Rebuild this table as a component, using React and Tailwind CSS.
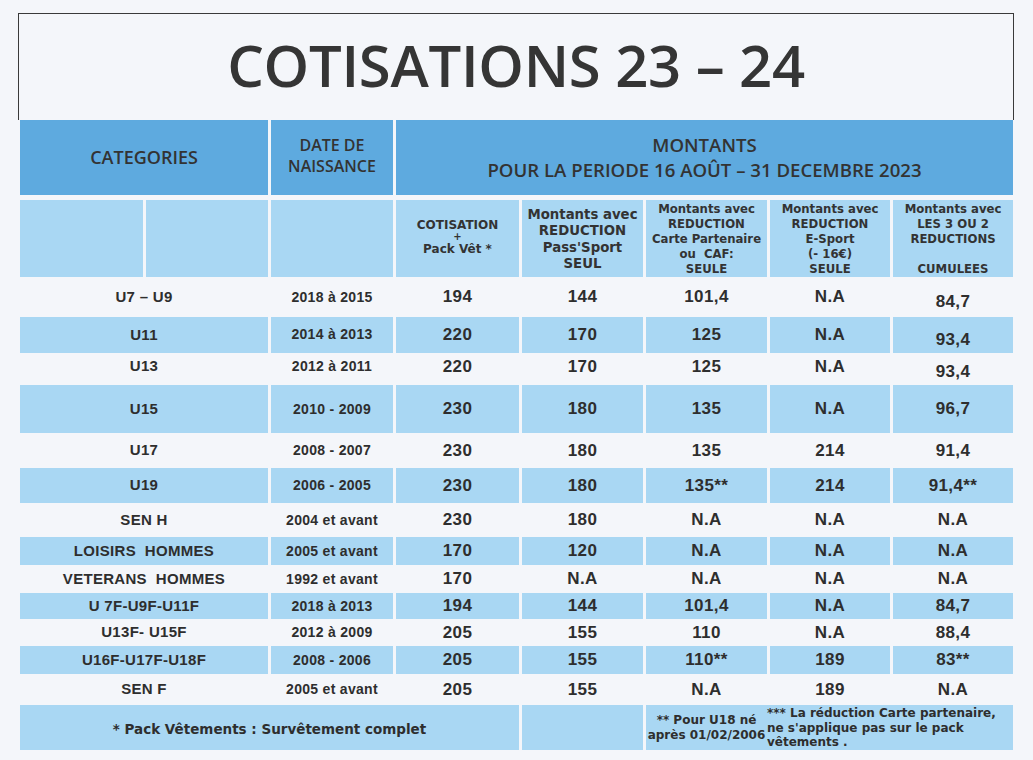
import React from "react";

const rows = [
  { cat: "U7 – U9", date: "2018 à 2015", v: ["194", "144", "101,4", "N.A", "84,7"], h: "h-[40px]", blue: false, low: true },
  { cat: "U11", date: "2014 à 2013", v: ["220", "170", "125", "N.A", "93,4"], h: "h-[31px]", blue: true, low: true },
  { cat: "U13", date: "2012 à 2011", v: ["220", "170", "125", "N.A", "93,4"], h: "h-[37px]", blue: false, low: true },
  { cat: "U15", date: "2010 - 2009", v: ["230", "180", "135", "N.A", "96,7"], h: "h-[48px]", blue: true },
  { cat: "U17", date: "2008 - 2007", v: ["230", "180", "135", "214", "91,4"], h: "h-[35px]", blue: false },
  { cat: "U19", date: "2006 - 2005", v: ["230", "180", "135**", "214", "91,4**"], h: "h-[35px]", blue: true },
  { cat: "SEN H", date: "2004 et avant", v: ["230", "180", "N.A", "N.A", "N.A"], h: "h-[34px]", blue: false },
  { cat: "LOISIRS  HOMMES", date: "2005 et avant", v: ["170", "120", "N.A", "N.A", "N.A"], h: "h-[28px]", blue: true },
  { cat: "VETERANS  HOMMES", date: "1992 et avant", v: ["170", "N.A", "N.A", "N.A", "N.A"], h: "h-[28px]", blue: false },
  { cat: "U 7F-U9F-U11F", date: "2018 à 2013", v: ["194", "144", "101,4", "N.A", "84,7"], h: "h-[26px]", blue: true },
  { cat: "U13F- U15F", date: "2012 à 2009", v: ["205", "155", "110", "N.A", "88,4"], h: "h-[27px]", blue: false },
  { cat: "U16F-U17F-U18F", date: "2008 - 2006", v: ["205", "155", "110**", "189", "83**"], h: "h-[28px]", blue: true },
  { cat: "SEN F", date: "2005 et avant", v: ["205", "155", "N.A", "189", "N.A"], h: "h-[31px]", blue: false },
];

const grid =
  "grid grid-cols-[123px_122px_122px_123px_121px_121px_120px_120px] gap-x-[3px]";

const wide = { fontFamily: '"DejaVu Sans", sans-serif' };
const arial = { fontFamily: '"Liberation Sans", Arial, sans-serif' };
const open = { fontFamily: '"Open Sans", sans-serif' };

function Row({ row }) {
  const bg = row.blue ? "bg-[#a9d7f3]" : "";

  return (
    <div className={`${grid} ${row.h}`}>
      <div
        className={`col-span-2 flex items-center justify-center whitespace-pre text-[15px] font-bold tracking-[0.3px] ${bg}`}
        style={arial}
      >
        {row.cat}
      </div>

      <div
        className={`flex items-center justify-center text-[14px] font-bold tracking-[0.3px] ${bg}`}
        style={arial}
      >
        {row.date}
      </div>

      {row.v.map((val, i) => (
        <div
          key={i}
          className={`flex items-center justify-center text-[17px] font-bold tracking-[0.4px] ${bg} ${
            i === 4 && row.low ? "pt-[10px]" : ""
          }`}
          style={arial}
        >
          {val}
        </div>
      ))}
    </div>
  );
}

export default function App() {
  return (
    <div className="w-[1033px] h-[760px] bg-[#f4f6fa] pt-[13px] text-[#2e2e2e] overflow-hidden">
      <div className="ml-[18px] w-[996px] h-[107px] border-l border-t border-r border-[#3a3a3a] flex items-center justify-center">
        <h1
          className="text-[58px] font-semibold text-[#353535] leading-none pb-[4px] tracking-[-0.3px]"
          style={open}
        >
          COTISATIONS 23 – 24
        </h1>
      </div>

      <div className="ml-[20px] w-[993px]">
        {/* header row 1 */}
        <div className={`${grid} h-[75px] font-semibold text-[#333]`} style={open}>
          <div className="col-span-2 bg-[#5eaadf] flex items-center justify-center text-[18px]">
            CATEGORIES
          </div>

          <div className="bg-[#5eaadf] flex items-center justify-center text-center text-[16px] leading-[21px] pb-[4px]">
            DATE DE
            <br />
            NAISSANCE
          </div>

          <div className="col-span-5 bg-[#5eaadf] flex flex-col items-center justify-center text-[18.6px] leading-[25px] pb-[2px]">
            <span>MONTANTS</span>
            <span>POUR LA PERIODE 16 AOÛT – 31 DECEMBRE 2023</span>
          </div>
        </div>

        {/* header row 2 */}
        <div className={`${grid} h-[77px] mt-[5px] font-bold text-[#333] text-center`} style={wide}>
          <div className="bg-[#a9d7f3]" />
          <div className="bg-[#a9d7f3]" />
          <div className="bg-[#a9d7f3]" />

          <div className="bg-[#a9d7f3] flex flex-col items-center justify-center text-[12px] leading-[12px] pb-[4px]">
            <span>COTISATION</span>
            <span className="text-[10px]">+</span>
            <span>Pack Vêt *</span>
          </div>

          <div className="bg-[#a9d7f3] flex flex-col items-center justify-center text-[13.3px] leading-[16.5px] pt-[2px]">
            <span>Montants avec</span>
            <span>REDUCTION</span>
            <span>Pass'Sport</span>
            <span>SEUL</span>
          </div>

          <div className="bg-[#a9d7f3] flex flex-col items-center justify-center text-[11.7px] leading-[15px] pt-[2px]">
            <span>Montants avec</span>
            <span>REDUCTION</span>
            <span className="whitespace-nowrap">Carte Partenaire</span>
            <span className="whitespace-pre">ou  CAF:</span>
            <span>SEULE</span>
          </div>

          <div className="bg-[#a9d7f3] flex flex-col items-center justify-center text-[11.7px] leading-[15px] pt-[2px]">
            <span>Montants avec</span>
            <span>REDUCTION</span>
            <span>E-Sport</span>
            <span>(- 16€)</span>
            <span>SEULE</span>
          </div>

          <div className="bg-[#a9d7f3] flex flex-col items-center justify-center text-[11.7px] leading-[15px] pt-[2px]">
            <span>Montants avec</span>
            <span>LES 3 OU 2</span>
            <span>REDUCTIONS</span>
            <span>&nbsp;</span>
            <span>CUMULEES</span>
          </div>
        </div>

        {/* data rows */}
        {rows.map((row) => (
          <Row key={row.cat} row={row} />
        ))}

        {/* footer */}
        <div className={`${grid} h-[43px] font-bold`} style={wide}>
          <div className="col-span-4 bg-[#a9d7f3] flex items-center justify-center text-[13.5px] pt-[3px]">
            * Pack Vêtements : Survêtement complet
          </div>

          <div className="bg-[#a9d7f3]" />

          <div className="bg-[#a9d7f3] flex flex-col items-center justify-center text-[12px] leading-[15px] whitespace-nowrap pt-[2px]">
            <span>** Pour U18 né</span>
            <span>après 01/02/2006</span>
          </div>

          <div className="col-span-2 bg-[#a9d7f3] flex flex-col justify-center text-[12px] leading-[14.5px] -ml-[3px] pt-[1px]">
            <span className="whitespace-nowrap">*** La réduction Carte partenaire,</span>
            <span>ne s'applique pas sur le pack</span>
            <span>vêtements .</span>
          </div>
        </div>
      </div>
    </div>
  );
}
